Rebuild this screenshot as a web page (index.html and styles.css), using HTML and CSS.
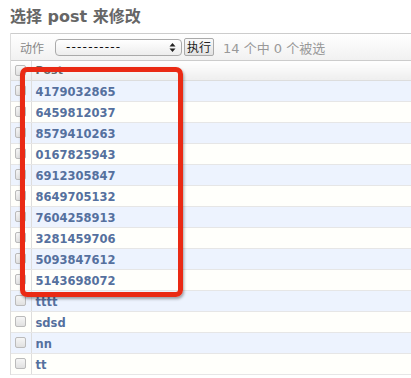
FILE: index.html
```html
<!DOCTYPE html>
<html>
  <head>
    <meta name="viewport" content="width=device-width, initial-scale=1" />
    <link rel="stylesheet" href="styles.css">
  </head>
  <body>
    <div class="page">
      <h1>选择 post 来修改</h1>

      <div class="module">
        <div class="actions">
          <label>动作</label>
          <div class="select">
            <span>----------</span>
            <svg width="7" height="11" viewBox="0 0 7 11">
              <path d="M0.5 4.5 L3.5 1 L6.5 4.5 Z M0.5 6.5 L3.5 10 L6.5 6.5 Z" fill="#222" />
            </svg>
          </div>
          <button class="go">执行</button>
          <span class="counter">14 个中 0 个被选</span>
        </div>

        <table class="results">
          <thead>
            <tr>
              <th class="check"><span class="box"></span></th>
              <th>Post</th>
            </tr>
          </thead>
          <tbody>
            <tr><td class="check"><span class="box"></span></td><td><a href="#">4179032865</a></td></tr>
            <tr><td class="check"><span class="box"></span></td><td><a href="#">6459812037</a></td></tr>
            <tr><td class="check"><span class="box"></span></td><td><a href="#">8579410263</a></td></tr>
            <tr><td class="check"><span class="box"></span></td><td><a href="#">0167825943</a></td></tr>
            <tr><td class="check"><span class="box"></span></td><td><a href="#">6912305847</a></td></tr>
            <tr><td class="check"><span class="box"></span></td><td><a href="#">8649705132</a></td></tr>
            <tr><td class="check"><span class="box"></span></td><td><a href="#">7604258913</a></td></tr>
            <tr><td class="check"><span class="box"></span></td><td><a href="#">3281459706</a></td></tr>
            <tr><td class="check"><span class="box"></span></td><td><a href="#">5093847612</a></td></tr>
            <tr><td class="check"><span class="box"></span></td><td><a href="#">5143698072</a></td></tr>
            <tr><td class="check"><span class="box"></span></td><td><a href="#">tttt</a></td></tr>
            <tr><td class="check"><span class="box"></span></td><td><a href="#">sdsd</a></td></tr>
            <tr><td class="check"><span class="box"></span></td><td><a href="#">nn</a></td></tr>
            <tr><td class="check"><span class="box"></span></td><td><a href="#">tt</a></td></tr>
          </tbody>
        </table>
      </div>

      <div class="highlight"></div>
    </div>
  </body>
</html>
```

FILE: styles.css
```css
* {
  box-sizing: border-box;
}

body {
  margin: 0;
  overflow: hidden;
  background: #fff;
  font-family: "DejaVu Sans", "Noto Sans CJK SC", sans-serif;
  color: #333;
}

.page {
  position: relative;
  padding-left: 10px;
}

h1 {
  margin: 0;
  height: 33px;
  padding-top: 6px;
  font-family: "DejaVu Sans", "Noto Sans CJK SC", sans-serif;
  font-size: 16px;
  line-height: 22px;
  font-weight: bold;
  color: #666;
}

.module {
  width: 420px;
  border-left: 1px solid #ddd;
}

.actions {
  display: flex;
  align-items: center;
  height: 28px;
  padding-left: 9px;
  border-top: 1px solid #ccc;
  border-bottom: 1px solid #ccc;
  background: linear-gradient(#fff, #f1f1f1);
  font-size: 12px;
  color: #888;
}

.actions label {
  font-family: "Noto Sans CJK SC", sans-serif;
  margin-right: 11px;
}

.select {
  display: flex;
  align-items: center;
  justify-content: space-between;
  width: 127px;
  height: 17px;
  padding: 0 5px 0 10px;
  border: 1px solid #aaa;
  border-radius: 4px;
  background: linear-gradient(#fff, #ededed);
  color: #111;
  font-size: 12px;
  letter-spacing: 1.2px;
}

.go {
  margin-left: 2px;
  height: 18px;
  padding: 0 2px;
  border: 1px solid #aaa;
  border-radius: 2px;
  background: linear-gradient(#fafafa, #e2e2e2);
  font-family: "Noto Sans CJK SC", sans-serif;
  font-size: 12px;
  line-height: 16px;
  color: #222;
}

.counter {
  margin-left: 9px;
  color: #999;
  font-size: 13px;
}

.results {
  width: 100%;
  border-collapse: collapse;
}

.results th,
.results td {
  padding: 0;
  text-align: left;
  vertical-align: middle;
}

.results thead th {
  height: 19px;
  background: linear-gradient(#fff, #eee);
  border-bottom: 1px solid #ddd;
  font-size: 11px;
  color: #666;
}

.results td {
  height: 21px;
  border-bottom: 1px solid #e6e6e6;
}

.results tbody tr:nth-child(odd) {
  background: #edf3fe;
}

.results tbody tr:nth-child(even) {
  background: #fffffb;
}

.results .check {
  width: 20px;
  padding-left: 4px;
  border-right: 1px solid #ddd;
}

.results td:last-child,
.results th:last-child {
  padding-left: 4px;
}

.box {
  display: block;
  width: 11px;
  height: 11px;
  border: 1px solid #bbb;
  border-radius: 2px;
  background: linear-gradient(#f6f6f6, #e0e0e0);
}

.results a {
  color: #55709e;
  font-size: 11.5px;
  font-weight: bold;
  text-decoration: none;
}

.highlight {
  position: absolute;
  left: 20px;
  top: 67px;
  width: 163px;
  height: 230px;
  border: 5px solid #ea2a14;
  border-radius: 7px;
  box-shadow: 1px 2px 3px rgba(0, 0, 0, 0.35);
}
```
